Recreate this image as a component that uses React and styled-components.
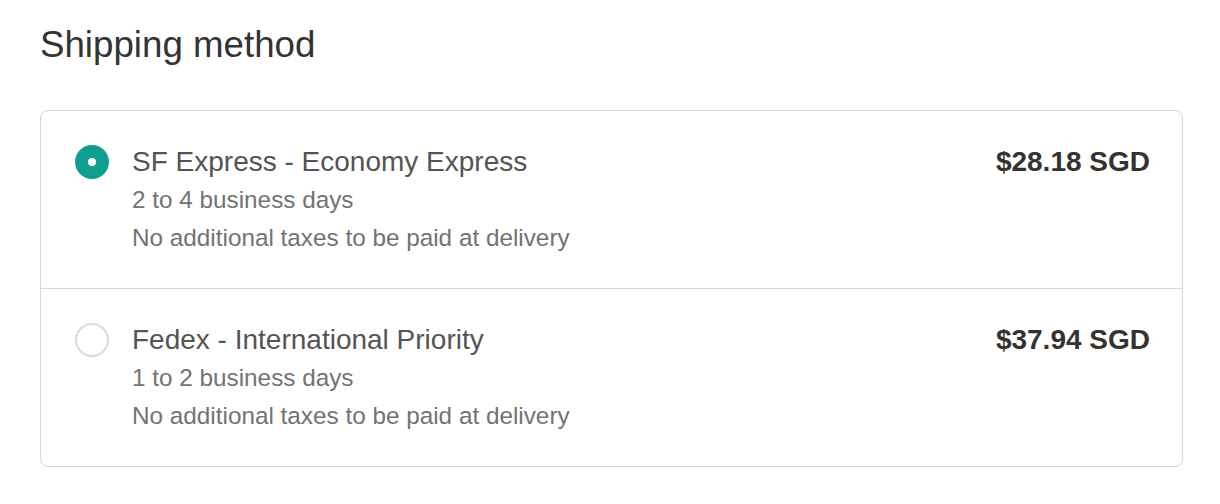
import React, { useState } from "react";
import styled, { createGlobalStyle } from "styled-components";

const GlobalStyle = createGlobalStyle`
  body {
    margin: 0;
    background: #fff;
    font-family: "Liberation Sans", Arial, sans-serif;
  }
`;

const methods = [
  {
    id: "sf",
    name: "SF Express - Economy Express",
    days: "2 to 4 business days",
    note: "No additional taxes to be paid at delivery",
    price: "$28.18 SGD",
  },
  {
    id: "fedex",
    name: "Fedex - International Priority",
    days: "1 to 2 business days",
    note: "No additional taxes to be paid at delivery",
    price: "$37.94 SGD",
  },
];

const Section = styled.section`
  padding: 23px 37px 0 40px;
`;

const Title = styled.h2`
  margin: 0 0 44px;
  font-size: 36.7px;
  line-height: 43px;
  font-weight: 400;
  color: #333;
`;

const Card = styled.div`
  border: 1px solid #d6d6d6;
  border-radius: 8px;
  overflow: hidden;
`;

const Row = styled.label`
  display: flex;
  align-items: flex-start;
  padding: 32px 32px 31px 34px;
  cursor: pointer;

  & + & {
    border-top: 1px solid #d6d6d6;
  }
`;

const Radio = styled.span`
  flex: none;
  width: 34px;
  height: 34px;
  margin-top: 2px;
  margin-right: 23px;
  border-radius: 50%;
  box-sizing: border-box;
  display: flex;
  align-items: center;
  justify-content: center;
  background: ${(p) => (p.checked ? "#0d9e8f" : "#fff")};
  border: ${(p) => (p.checked ? "none" : "2px solid #dadada")};

  &::after {
    content: "";
    display: ${(p) => (p.checked ? "block" : "none")};
    width: 8px;
    height: 8px;
    border-radius: 50%;
    background: #fff;
  }
`;

const Info = styled.div`
  flex: 1;
`;

const Name = styled.div`
  font-size: 28px;
  line-height: 38px;
  color: #545454;
`;

const Detail = styled.div`
  font-size: 24.3px;
  line-height: 38px;
  color: #737373;
`;

const Price = styled.div`
  font-size: 28px;
  line-height: 38px;
  font-weight: 700;
  color: #333;
`;

export default function App() {
  const [selected, setSelected] = useState("sf");

  return (
    <>
      <GlobalStyle />
      <Section>
        <Title>Shipping method</Title>
        <Card>
          {methods.map((m) => (
            <Row key={m.id} onClick={() => setSelected(m.id)}>
              <Radio checked={selected === m.id} />
              <Info>
                <Name>{m.name}</Name>
                <Detail>{m.days}</Detail>
                <Detail>{m.note}</Detail>
              </Info>
              <Price>{m.price}</Price>
            </Row>
          ))}
        </Card>
      </Section>
    </>
  );
}
